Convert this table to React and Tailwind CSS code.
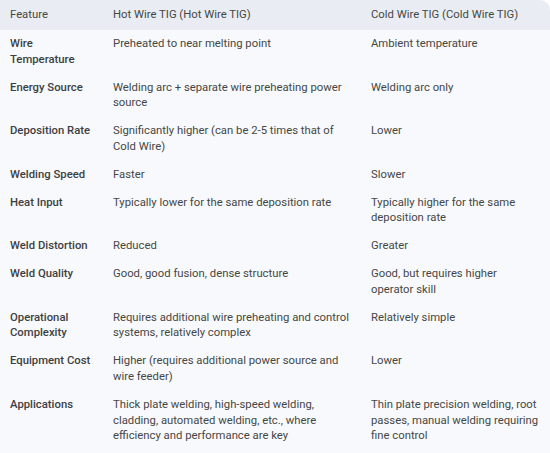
import React from "react";

const rows = [
  ["Wire Temperature", "Preheated to near melting point", "Ambient temperature"],
  ["Energy Source", "Welding arc + separate wire preheating power source", "Welding arc only"],
  ["Deposition Rate", "Significantly higher (can be 2-5 times that of Cold Wire)", "Lower"],
  ["Welding Speed", "Faster", "Slower"],
  ["Heat Input", "Typically lower for the same deposition rate", "Typically higher for the same deposition rate"],
  ["Weld Distortion", "Reduced", "Greater"],
  ["Weld Quality", "Good, good fusion, dense structure", "Good, but requires higher\noperator skill"],
  ["Operational Complexity", "Requires additional wire preheating and control systems, relatively complex", "Relatively simple"],
  ["Equipment Cost", "Higher (requires additional power source and wire feeder)", "Lower"],
  [
    "Applications",
    "Thick plate welding, high-speed welding, cladding, automated welding, etc., where efficiency and performance are key",
    "Thin plate precision welding, root passes, manual welding requiring fine control",
  ],
];

export default function App() {
  return (
    <div className="w-[550px] h-[453px] overflow-hidden bg-white font-['Roboto',sans-serif] text-[11.3px] leading-[15.8px] text-[#444746]">
      <div className="bg-[#f8f9fd] rounded-tr-[10px] h-full">
        <div className="grid grid-cols-[103px_258px_1fr] bg-[#e9edf3] rounded-tr-[10px] h-[30px] items-center">
          <div className="pl-[10px]">Feature</div>
          <div className="pl-[10px]">Hot Wire TIG (Hot Wire TIG)</div>
          <div className="pl-[10px]">Cold Wire TIG (Cold Wire TIG)</div>
        </div>
        {rows.map((r) => (
          <div key={r[0]} className="grid grid-cols-[103px_258px_1fr] py-[6px]">
            <div className="pl-[10px] pr-[6px] font-medium text-[#3c4043]">{r[0]}</div>
            <div className="pl-[10px] pr-[4px]">{r[1]}</div>
            <div className="pl-[10px] pr-[6px] whitespace-pre-line">{r[2]}</div>
          </div>
        ))}
      </div>
    </div>
  );
}
